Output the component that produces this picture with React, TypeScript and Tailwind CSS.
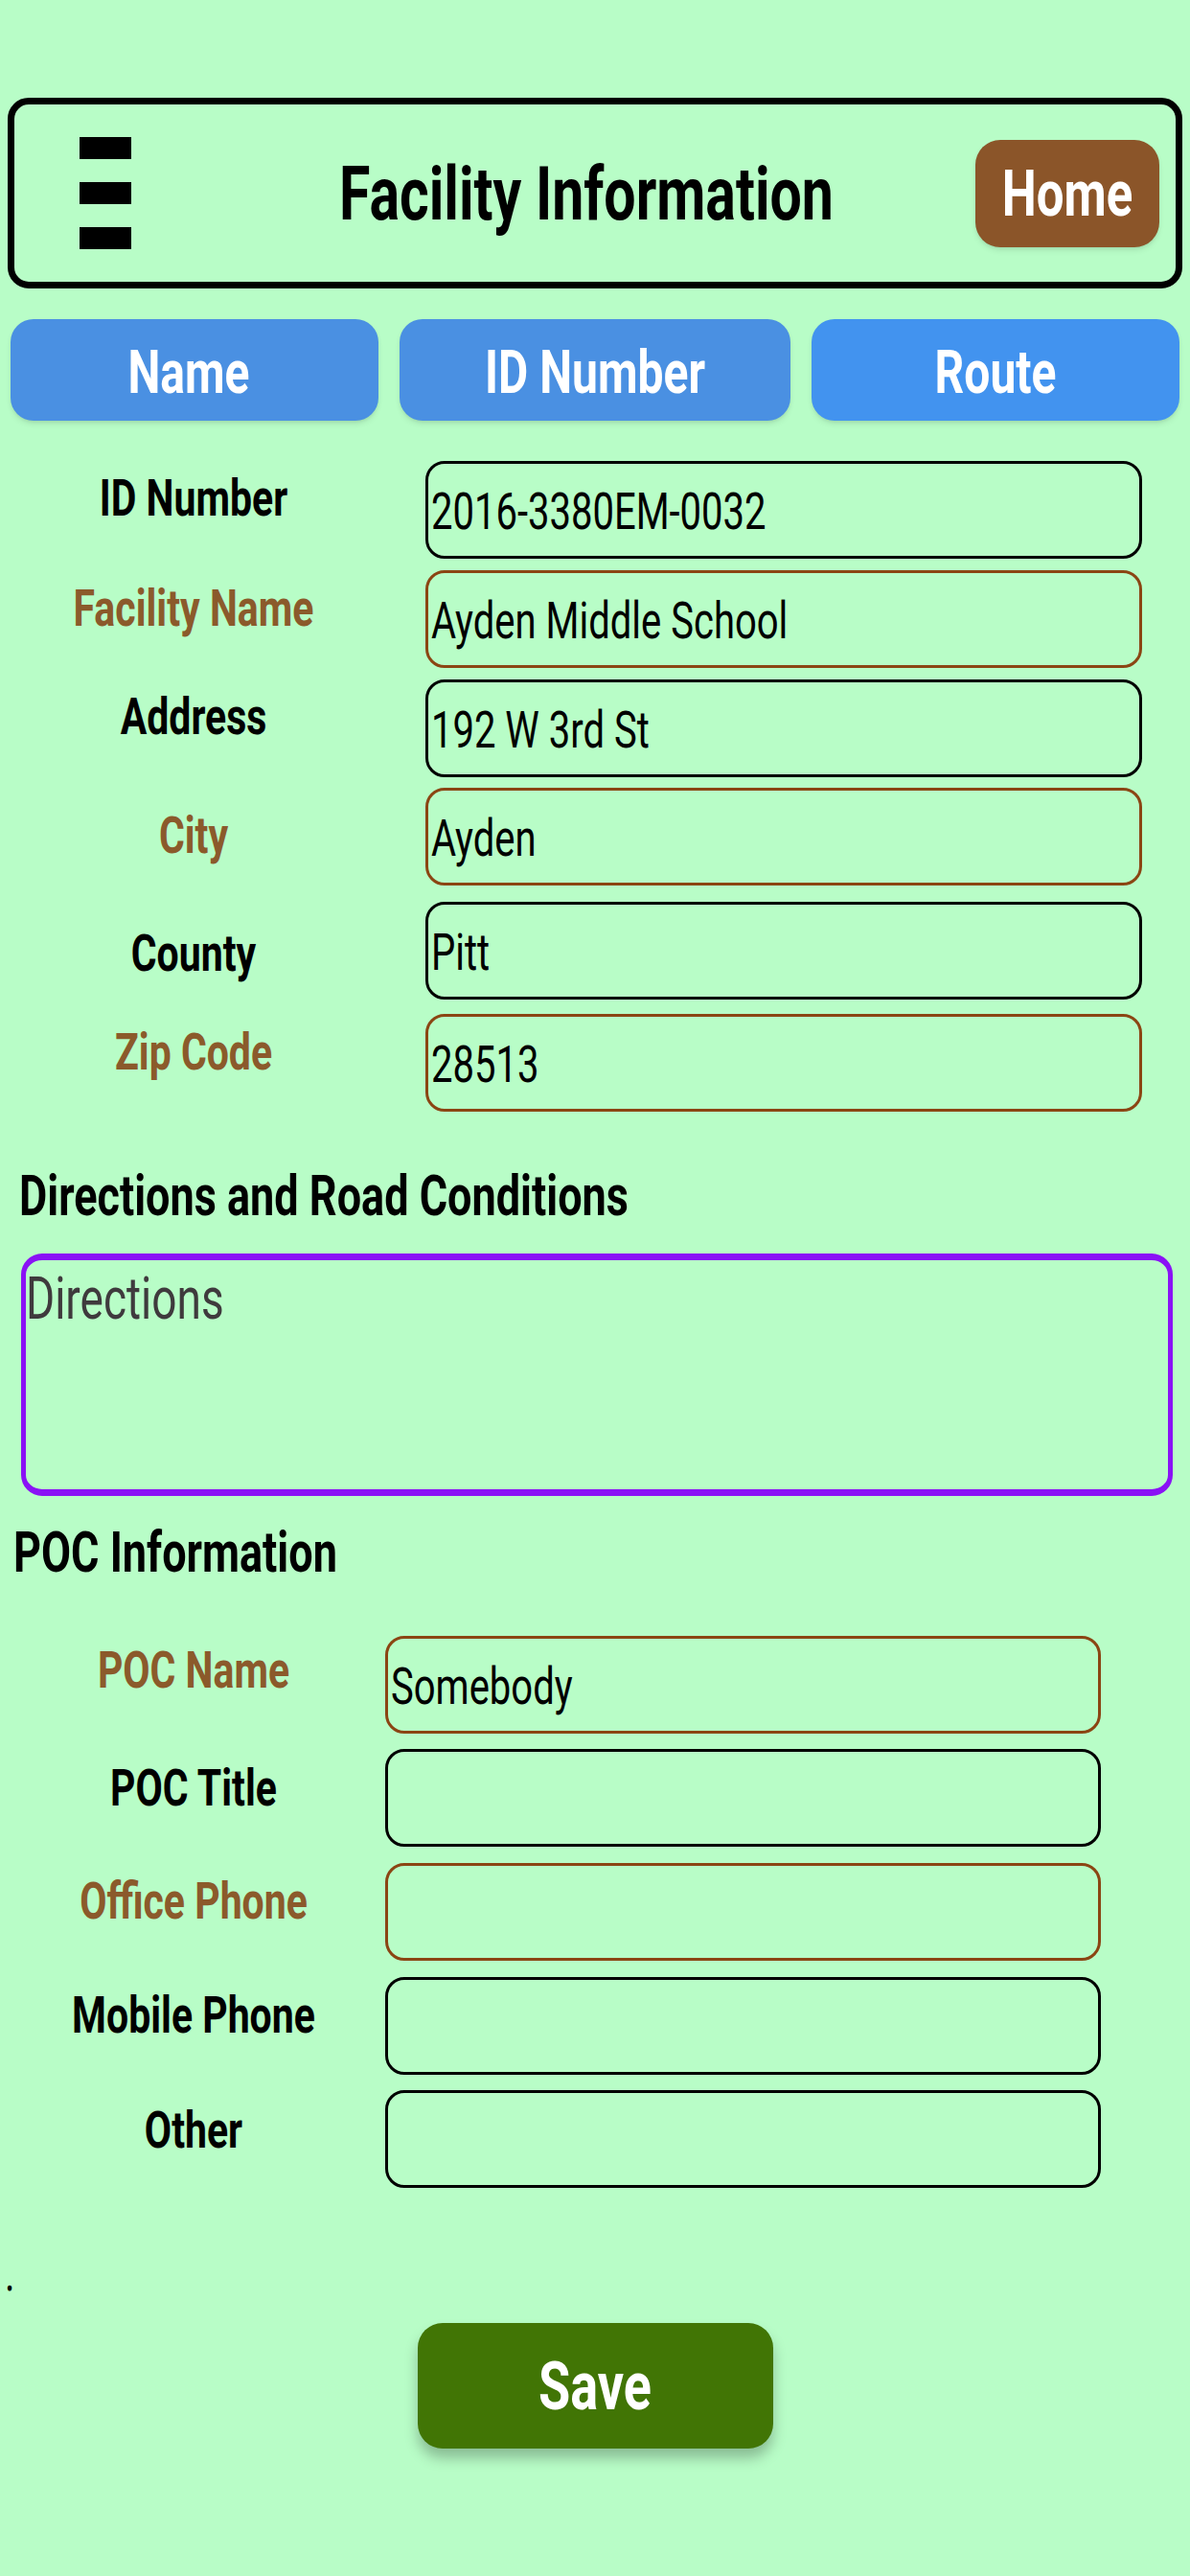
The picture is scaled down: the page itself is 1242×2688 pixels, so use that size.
import React from 'react';

type Row = { label: string; value: string; brown: boolean; mt: string; pt: string };

const facilityRows: Row[] = [
  { label: 'ID Number', value: '2016-3380EM-0032', brown: false, mt: 'mt-0', pt: 'pt-[19px]' },
  { label: 'Facility Name', value: 'Ayden Middle School', brown: true, mt: 'mt-[12px]', pt: 'pt-[20px]' },
  { label: 'Address', value: '192 W 3rd St', brown: false, mt: 'mt-[12px]', pt: 'pt-[19px]' },
  { label: 'City', value: 'Ayden', brown: true, mt: 'mt-[11px]', pt: 'pt-[30px]' },
  { label: 'County', value: 'Pitt', brown: false, mt: 'mt-[17px]', pt: 'pt-[34px]' },
  { label: 'Zip Code', value: '28513', brown: true, mt: 'mt-[15px]', pt: 'pt-[20px]' },
];

const pocRows: Row[] = [
  { label: 'POC Name', value: 'Somebody', brown: true, mt: 'mt-0', pt: 'pt-[16px]' },
  { label: 'POC Title', value: '', brown: false, mt: 'mt-[16px]', pt: 'pt-[21px]' },
  { label: 'Office Phone', value: '', brown: true, mt: 'mt-[17px]', pt: 'pt-[20px]' },
  { label: 'Mobile Phone', value: '', brown: false, mt: 'mt-[17px]', pt: 'pt-[20px]' },
  { label: 'Other', value: '', brown: false, mt: 'mt-[16px]', pt: 'pt-[22px]' },
];

// the screen renders its type tall and narrow, so stretch each text run vertically
const Tall: React.FC<{ children: React.ReactNode; className?: string }> = ({ children, className = '' }) => (
  <span className={`inline-block origin-center scale-y-[1.32] ${className}`}>{children}</span>
);

const Field: React.FC<{ row: Row; gap: string; width: string }> = ({ row, gap, width }) => (
  <div className={`flex ${row.mt}`}>
    <div className={`w-[400px] shrink-0 pl-[4px] text-center ${row.pt}`}>
      <Tall className={`text-[41px] leading-none font-bold ${row.brown ? 'text-[#8b5a2b]' : 'text-black'}`}>
        {row.label}
      </Tall>
    </div>
    <div
      className={`${gap} ${width} h-[102px] rounded-[20px] border-[3px] flex items-center pt-[6px] px-[3px] ${
        row.brown ? 'border-[#8b4513]' : 'border-black'
      }`}
    >
      <Tall className="text-[40px] leading-none text-black whitespace-nowrap">{row.value}</Tall>
    </div>
  </div>
);

export default function App() {
  return (
    <div className="min-h-screen w-[1242px] bg-[#b8fdc7] pt-[102px] font-['Roboto','Liberation_Sans',sans-serif]">
      {/* header */}
      <div className="mx-[8px] h-[199px] border-[7px] border-black rounded-[22px] flex items-center pl-[68px] pr-[17px]">
        <div className="flex flex-col gap-[24px]">
          <div className="w-[54px] h-[23px] bg-black" />
          <div className="w-[54px] h-[23px] bg-black" />
          <div className="w-[54px] h-[23px] bg-black" />
        </div>
        <h1 className="ml-[217px] text-[59px] leading-none font-bold text-black">
          <Tall>Facility Information</Tall>
        </h1>
        <button className="ml-auto w-[192px] h-[112px] rounded-[26px] bg-[#8b5529] shadow-md flex items-center justify-center">
          <Tall className="text-[51px] leading-none font-bold text-white">Home</Tall>
        </button>
      </div>

      {/* tabs */}
      <div className="mt-[32px] pl-[11px] flex gap-[22px]">
        <button className="w-[384px] h-[106px] rounded-[24px] bg-[#4a90e2] shadow-md flex items-center justify-center pt-[6px] pr-[12px]">
          <Tall className="text-[48px] leading-none font-bold text-white">Name</Tall>
        </button>
        <button className="w-[408px] h-[106px] rounded-[24px] bg-[#4a90e2] shadow-md flex items-center justify-center pt-[6px]">
          <Tall className="text-[48px] leading-none font-bold text-white">ID Number</Tall>
        </button>
        <button className="w-[384px] h-[106px] rounded-[24px] bg-[#4293ef] shadow-md flex items-center justify-center pt-[6px]">
          <Tall className="text-[48px] leading-none font-bold text-white">Route</Tall>
        </button>
      </div>

      {/* facility fields */}
      <div className="mt-[42px]">
        {facilityRows.map((r) => (
          <Field key={r.label} row={r} gap="ml-[44px]" width="w-[748px]" />
        ))}
      </div>

      <h2 className="mt-[65px] pl-[20px] text-[45px] leading-none font-bold text-black">
        <Tall>Directions and Road Conditions</Tall>
      </h2>

      <div className="mt-[38px] ml-[22px] w-[1202px] h-[253px] rounded-[22px] border-x-[5px] border-y-[7px] border-[#8a12f5] pt-[17px]">
        <Tall className="text-[46px] leading-none text-[#3f3a3d]">Directions</Tall>
      </div>

      <h2 className="mt-[36px] pl-[14px] text-[45px] leading-none font-bold text-black">
        <Tall>POC Information</Tall>
      </h2>

      {/* poc fields */}
      <div className="mt-[65px]">
        {pocRows.map((r) => (
          <Field key={r.label} row={r} gap="ml-[2px]" width="w-[747px]" />
        ))}
      </div>

      <div className="mt-[70px] pl-[5px] h-[40px] text-[40px] leading-none text-black">
        <Tall>.</Tall>
      </div>

      <div className="mt-[31px] flex justify-center pb-[100px]">
        <button className="w-[371px] h-[131px] rounded-[26px] bg-[#417505] shadow-[0_10px_14px_rgba(0,0,0,0.25)] flex items-center justify-center">
          <Tall className="text-[54px] leading-none font-bold text-white">Save</Tall>
        </button>
      </div>
    </div>
  );
}
